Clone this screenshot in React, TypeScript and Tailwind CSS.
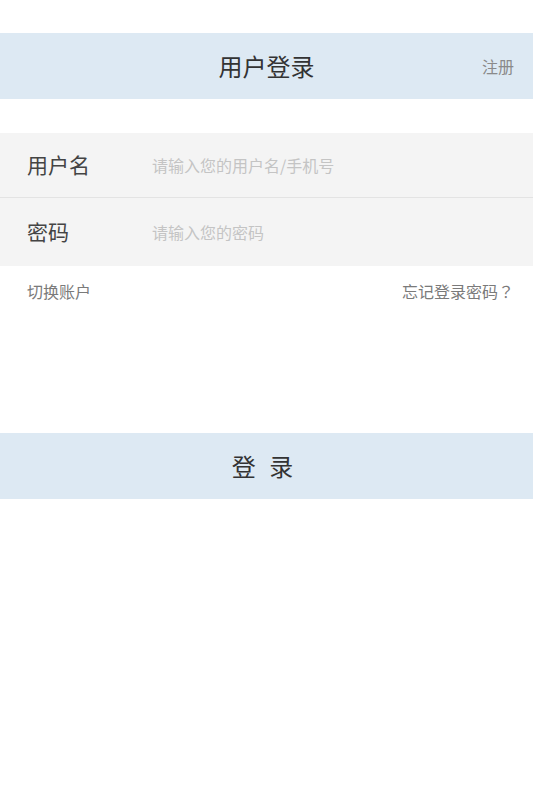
import React from "react";

const font = { fontFamily: '"Noto Sans CJK SC", "Noto Sans", sans-serif' };

function Field({ label, placeholder, type = "text", className = "" }: { label: string; placeholder: string; type?: string; className?: string }) {
  return (
    <div className={`flex items-center bg-[#f4f4f4] ${className}`}>
      <label className="w-[152px] shrink-0 pl-[27px] text-[21px] text-[#444]">{label}</label>
      <input
        type={type}
        placeholder={placeholder}
        className="flex-1 bg-transparent text-[16px] text-[#333] outline-none placeholder:text-[#c4c4c4]"
      />
    </div>
  );
}

export default function App() {
  return (
    <div className="min-h-[800px] w-full bg-white" style={font}>
      <div className="h-[33px]" />
      <header className="relative flex h-[66px] items-center justify-center bg-[#dde9f3]">
        <h1 className="text-[24px] text-[#333]">用户登录</h1>
        <a className="absolute right-[19px] top-1/2 -translate-y-1/2 text-[16px] text-[#8a8a8a]">注册</a>
      </header>

      <form className="mt-[34px]" onSubmit={(e) => e.preventDefault()}>
        <Field label="用户名" placeholder="请输入您的用户名/手机号" className="h-[65px] border-b border-[#e3e3e3]" />
        <Field label="密码" placeholder="请输入您的密码" type="password" className="h-[68px]" />

        <div className="flex items-center justify-between pl-[27px] pr-[19px] pt-[13px] text-[16px] text-[#7a7a7a] [text-spacing-trim:space-all]">
          <span>切换账户</span>
          <span>
            忘记登录密码<span style={{ fontFamily: '"Noto Sans CJK TC", sans-serif' }}>？</span>
          </span>
        </div>

        <button
          type="submit"
          className="mt-[130px] flex h-[66px] w-full items-center justify-center pr-[4px] text-[24px] tracking-[4px] text-[#333] bg-[#dde9f3]"
        >
          登 录
        </button>
      </form>
    </div>
  );
}
